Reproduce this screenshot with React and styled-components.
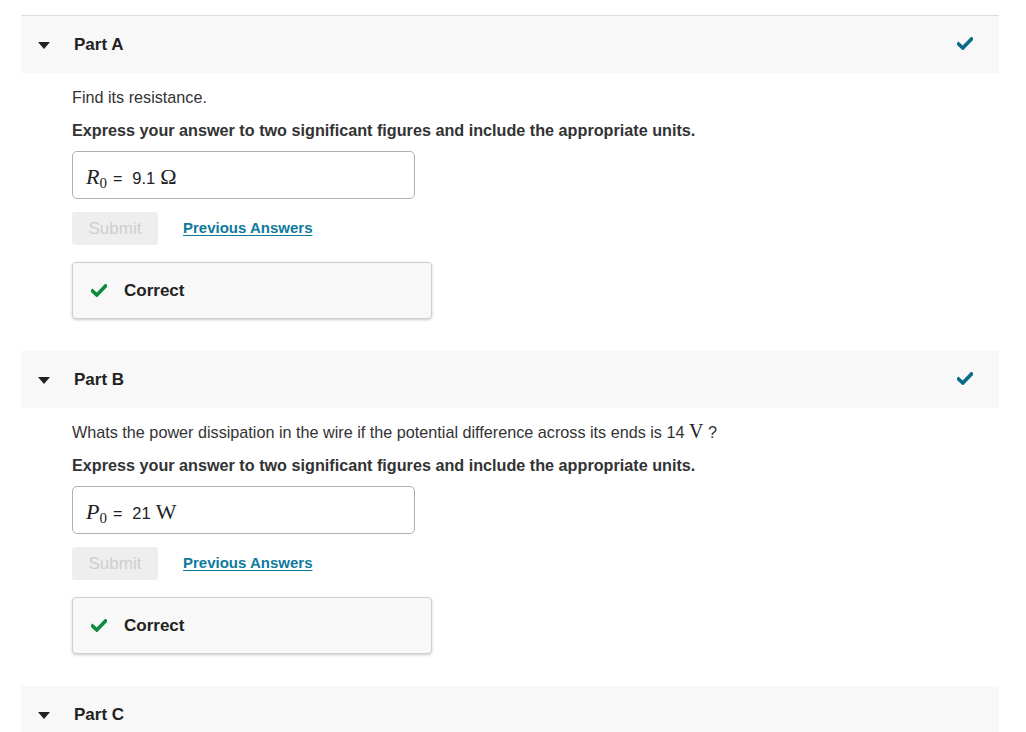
import React from "react";
import styled, { createGlobalStyle } from "styled-components";

const GlobalStyle = createGlobalStyle`
  body {
    margin: 0;
    background: #fff;
    font-family: "Liberation Sans", Arial, sans-serif;
    color: #333;
  }
`;

const CheckIcon = ({ color }) => (
  <svg width="16" height="13" viewBox="0 0 16 13">
    <path
      d="M1.5 7 L5.8 11 L14.5 2"
      fill="none"
      stroke={color}
      strokeWidth="3.6"
      strokeLinecap="square"
    />
  </svg>
);

const App = () => {
  const parts = [
    {
      label: "Part A",
      question: <>Find its resistance.</>,
      symbol: "R",
      value: "9.1",
      unit: "\u03A9",
    },
    {
      label: "Part B",
      question: (
        <>
          Whats the power dissipation in the wire if the potential difference
          across its ends is 14 <InlineMath>V</InlineMath> ?
        </>
      ),
      symbol: "P",
      value: "21",
      unit: "W",
    },
  ];

  return (
    <>
      <GlobalStyle />
      <Page>
        <PartList>
          {parts.map((p) => (
            <Part key={p.label}>
              <PartHeader>
                <Caret />
                <PartTitle>{p.label}</PartTitle>
                <HeaderCheck>
                  <CheckIcon color="#0b6a86" />
                </HeaderCheck>
              </PartHeader>
              <PartBody>
                <Question>{p.question}</Question>
                <Instruction>
                  Express your answer to two significant figures and include
                  the appropriate units.
                </Instruction>
                <AnswerBox>
                  <MathItalic>{p.symbol}</MathItalic>
                  <MathSub>0</MathSub>
                  <Equals>=</Equals>
                  <Value>{p.value}</Value>
                  <MathUnit>{p.unit}</MathUnit>
                </AnswerBox>
                <ActionRow>
                  <SubmitButton disabled>Submit</SubmitButton>
                  <PrevLink href="#">Previous Answers</PrevLink>
                </ActionRow>
                <Feedback>
                  <CheckIcon color="#0d8a3e" />
                  <FeedbackText>Correct</FeedbackText>
                </Feedback>
              </PartBody>
            </Part>
          ))}
          <Part>
            <PartHeader>
              <Caret />
              <PartTitle>Part C</PartTitle>
            </PartHeader>
          </Part>
        </PartList>
      </Page>
    </>
  );
};

export default App;

const Page = styled.div`
  padding: 15px 27px 0 21px;
  height: 732px;
  overflow: hidden;
  box-sizing: border-box;
`;

const PartList = styled.div`
  border-top: 1px solid #dcdcdc;
  display: flex;
  flex-direction: column;
`;

const Part = styled.section`
  display: flex;
  flex-direction: column;
`;

const PartHeader = styled.div`
  height: 57px;
  flex-shrink: 0;
  background: #f8f8f8;
  display: flex;
  align-items: center;
  padding: 0 26px 0 17px;
`;

const Caret = styled.span`
  width: 0;
  height: 0;
  border-left: 6px solid transparent;
  border-right: 6px solid transparent;
  border-top: 7px solid #222;
  margin-right: 24px;
  margin-top: 1px;
`;

const PartTitle = styled.h3`
  margin: 0;
  font-size: 17px;
  font-weight: bold;
  color: #222;
  flex: 1;
`;

const HeaderCheck = styled.span`
  display: flex;
  margin-top: -2px;
`;

const PartBody = styled.div`
  padding: 14px 0 32px 51px;
  display: flex;
  flex-direction: column;
  align-items: flex-start;
`;

const Question = styled.p`
  margin: 0;
  font-size: 16.2px;
  line-height: 20px;
  color: #333;
`;

const InlineMath = styled.span`
  font-family: "Liberation Serif", "Times New Roman", serif;
  font-size: 20px;
  line-height: 0;
  color: #222;
`;

const Instruction = styled.p`
  margin: 13px 0 0;
  font-size: 16.2px;
  line-height: 20px;
  font-weight: bold;
  color: #333;
`;

const AnswerBox = styled.div`
  margin-top: 11px;
  width: 343px;
  height: 48px;
  box-sizing: border-box;
  border: 1px solid #b0b0b0;
  border-radius: 5px;
  display: flex;
  align-items: baseline;
  padding: 12px 0 0 13px;
  color: #222;
`;

const MathItalic = styled.span`
  font-family: "Liberation Serif", "Times New Roman", serif;
  font-style: italic;
  font-size: 22px;
`;

const MathSub = styled.span`
  font-family: "Liberation Serif", "Times New Roman", serif;
  font-size: 15px;
  position: relative;
  top: 4px;
`;

const MathUnit = styled.span`
  font-family: "Liberation Serif", "Times New Roman", serif;
  font-size: 22px;
`;

const Equals = styled.span`
  font-size: 16px;
  margin: 0 10px 0 6px;
`;

const Value = styled.span`
  font-size: 16.5px;
  margin-right: 5px;
`;

const ActionRow = styled.div`
  margin-top: 13px;
  display: flex;
  align-items: center;
  gap: 25px;
`;

const SubmitButton = styled.button`
  width: 86px;
  height: 33px;
  border: none;
  border-radius: 3px;
  background: #eeeeee;
  color: #cfcfcf;
  font-family: "Liberation Sans", Arial, sans-serif;
  font-size: 17px;
  padding: 0;
`;

const PrevLink = styled.a`
  color: #0e7a9c;
  font-size: 15px;
  font-weight: bold;
  text-decoration: underline;
  text-underline-offset: 2px;
  margin-top: -2px;
`;

const Feedback = styled.div`
  margin-top: 17px;
  width: 360px;
  height: 57px;
  box-sizing: border-box;
  background: #f8f8f8;
  border: 1px solid #cfcfcf;
  border-radius: 4px;
  box-shadow: 0 1px 3px rgba(0, 0, 0, 0.2);
  display: flex;
  align-items: center;
  padding-left: 18px;
  gap: 17px;
`;

const FeedbackText = styled.span`
  font-size: 17px;
  font-weight: bold;
  color: #222;
`;
